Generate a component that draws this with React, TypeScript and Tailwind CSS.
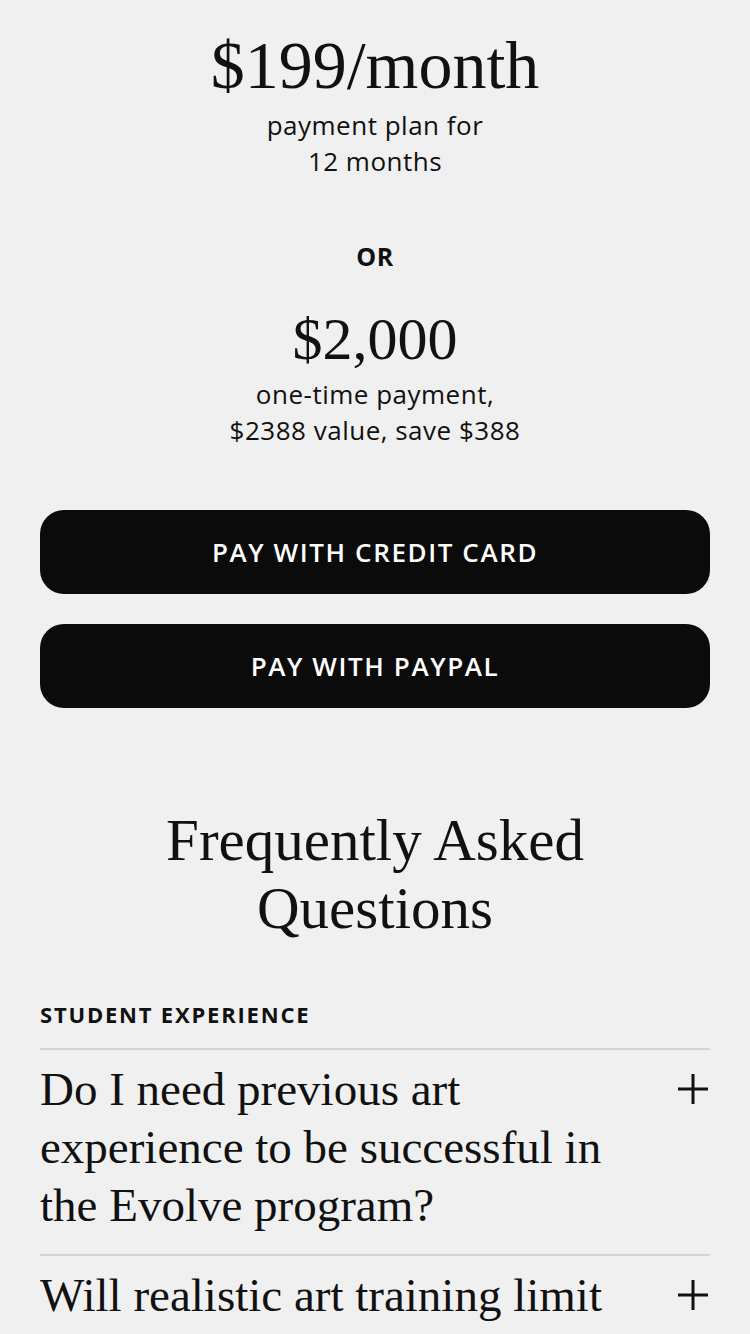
import React from "react";

function Plus() {
  return (
    <svg width="30" height="30" viewBox="0 0 30 30" className="block">
      <path d="M15 0V30M0 15H30" stroke="#111" strokeWidth="3" fill="none" />
    </svg>
  );
}

function Question({ lines }: { lines: string[] }) {
  return (
    <div className="border-t-2 border-[#d4d4d4] pt-[10px] pb-[20px] flex items-start justify-between">
      <p className="font-['Liberation_Serif','Times_New_Roman',serif] text-[47px] leading-[58px] text-[#111]">
        {lines.map((l, i) => (
          <span key={i} className="block">
            {l}
          </span>
        ))}
      </p>
      <div className="h-[58px] flex items-center mr-[2px] shrink-0">
        <Plus />
      </div>
    </div>
  );
}

export default function App() {
  return (
    <div className="min-h-[1334px] w-full bg-[#f0f0f0] overflow-hidden">
      <div className="px-10 text-[#111]">
        <div className="flex flex-col items-center text-center pt-[33px]">
          <h1 className="font-['Liberation_Serif','Times_New_Roman',serif] text-[68px] leading-[64px]">
            $199/month
          </h1>
          <p className="mt-[10px] font-['Open_Sans','Liberation_Sans',Arial,sans-serif] text-[26px] leading-[36px] tracking-[0.5px]">
            payment plan for
            <br />
            12 months
          </p>
          <p className="mt-[59px] font-['Open_Sans','Liberation_Sans',Arial,sans-serif] text-[25px] leading-[36px] font-bold tracking-[0.5px]">
            OR
          </p>
          <h2 className="mt-[37px] font-['Liberation_Serif','Times_New_Roman',serif] text-[60px] leading-[56px]">
            $2,000
          </h2>
          <p className="mt-[9px] font-['Open_Sans','Liberation_Sans',Arial,sans-serif] text-[26px] leading-[36px] tracking-[0.5px]">
            one-time payment,
            <br />
            $2388 value, save $388
          </p>
        </div>

        <div className="mt-[62px] flex flex-col gap-[30px]">
          <button className="h-[84px] w-full rounded-[24px] bg-[#0b0b0b] text-white font-['Open_Sans','Liberation_Sans',Arial,sans-serif] text-[26px] font-semibold tracking-[1.6px]">
            PAY WITH CREDIT CARD
          </button>
          <button className="h-[84px] w-full rounded-[24px] bg-[#0b0b0b] text-white font-['Open_Sans','Liberation_Sans',Arial,sans-serif] text-[26px] font-semibold tracking-[1.6px]">
            PAY WITH PAYPAL
          </button>
        </div>

        <h2 className="mt-[98px] text-center font-['Liberation_Serif','Times_New_Roman',serif] text-[59px] leading-[68px]">
          Frequently Asked
          <br />
          Questions
        </h2>

        <p className="mt-[58px] font-['Open_Sans','Liberation_Sans',Arial,sans-serif] text-[22px] leading-[28px] font-bold tracking-[1.8px]">
          STUDENT EXPERIENCE
        </p>

        <div className="mt-[20px]">
          <Question
            lines={[
              "Do I need previous art",
              "experience to be successful in",
              "the Evolve program?",
            ]}
          />
          <Question lines={["Will realistic art training limit", "my creativity?"]} />
        </div>
      </div>
    </div>
  );
}
